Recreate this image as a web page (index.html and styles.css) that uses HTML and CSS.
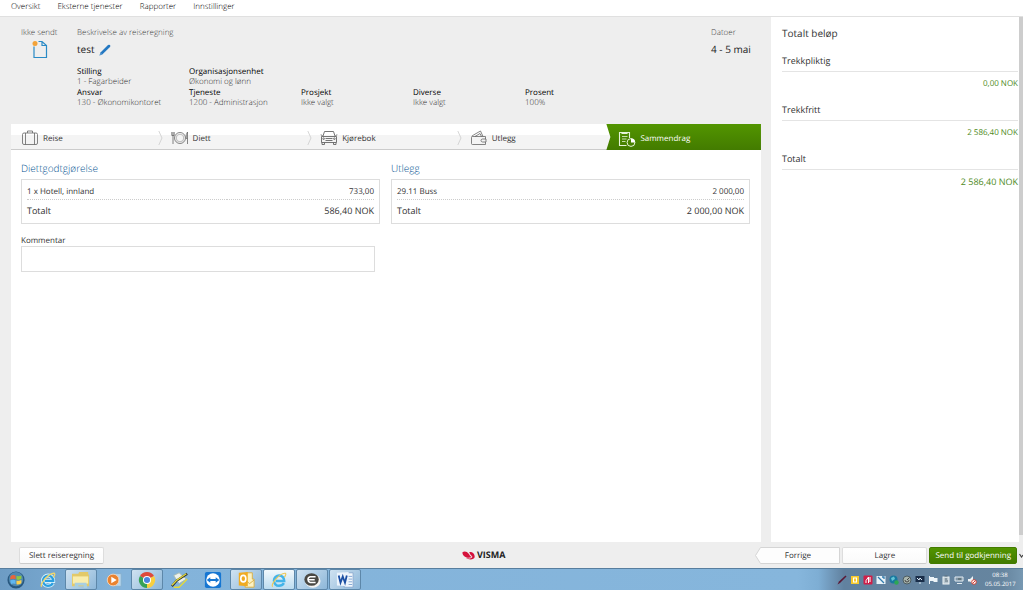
FILE: index.html
```html
<!DOCTYPE html>
<html lang="no">
<head>
<meta charset="utf-8">
<title>Reiseregning</title>
<link rel="stylesheet" href="styles.css">
</head>
<body>
<nav class="topnav">
  <a href="#">Oversikt</a>
  <a href="#">Eksterne tjenester</a>
  <a href="#">Rapporter</a>
  <a href="#">Innstillinger</a>
</nav>

<div class="workspace">
  <main class="claim">
    <header class="claim-head">
      <div class="status">
        <span class="label">Ikke sendt</span>
        <svg class="status-icon" viewBox="0 0 16 19" aria-hidden="true">
          <path d="M2 6.500V17.500H14.500V5.500L10 1.500H6.500M10 1.500V5.500H14.500" fill="none" stroke="#2a8bc6" stroke-width="1.200"/>
          <circle cx="3" cy="3.500" r="2.500" fill="#f2a33a"/>
        </svg>
      </div>
      <div class="about">
        <span class="label">Beskrivelse av reiseregning</span>
        <h1 class="title">test
          <button class="edit" type="button" aria-label="Rediger">
            <svg viewBox="0 0 12 12" aria-hidden="true"><path d="M.5 11.500L1.500 8.500 9 1Q10 .300 11 1 11.700 2 11 3L3.500 10.200Z" fill="#2478c2"/><path d="M.5 11.500L1.500 8.500 3.500 10.200Z" fill="#5d9bd0"/></svg>
          </button>
        </h1>
        <dl class="details">
          <div><dt>Stilling</dt><dd>1 - Fagarbeider</dd></div>
          <div class="wide"><dt>Organisasjonsenhet</dt><dd>Økonomi og lønn</dd></div>
          <div><dt>Ansvar</dt><dd>130 - Økonomikontoret</dd></div>
          <div><dt>Tjeneste</dt><dd>1200 - Administrasjon</dd></div>
          <div><dt>Prosjekt</dt><dd>Ikke valgt</dd></div>
          <div><dt>Diverse</dt><dd>Ikke valgt</dd></div>
          <div><dt>Prosent</dt><dd>100%</dd></div>
        </dl>
      </div>
      <div class="dates">
        <span class="label">Datoer</span>
        <span class="title">4 - 5 mai</span>
      </div>
    </header>

    <div class="steps">
      <a class="step" href="#">
        <svg class="step-icon" viewBox="0 0 18 16" aria-hidden="true"><g fill="none" stroke="#666" stroke-width=".8"><rect x="1.500" y="3" width="15" height="11.500" rx="1.500"/><path d="M4.500 3V14.500M13.500 3V14.500M6.500 3V1H11.500V3"/></g></svg>
        Reise
        <svg class="chevron" viewBox="0 0 5 16" aria-hidden="true"><path d="M.8 1L4 8 .8 15" fill="none" stroke="#ccc" stroke-width=".8"/></svg>
      </a>
      <a class="step" href="#">
        <svg class="step-icon" viewBox="0 0 18 16" aria-hidden="true"><g fill="none" stroke="#666" stroke-width=".8"><circle cx="9" cy="8" r="5.500"/><circle cx="9" cy="8" r="3.800" stroke="#aaa"/><path d="M2 6V14M.8 2V5.500H3.200V2M2 2V6M16.500 14V2Q14.800 4 15.200 8.500H16.500"/></g></svg>
        Diett
        <svg class="chevron" viewBox="0 0 5 16" aria-hidden="true"><path d="M.8 1L4 8 .8 15" fill="none" stroke="#ccc" stroke-width=".8"/></svg>
      </a>
      <a class="step" href="#">
        <svg class="step-icon" viewBox="0 0 18 16" aria-hidden="true"><g fill="none" stroke="#666" stroke-width=".9"><path d="M3 6L4.500 1.500H13.500L15 6M1.500 6.500H16.500V12.500H1.500ZM2 12.500V14.500H4.500V12.500M13.500 12.500V14.500H16V12.500M2.500 5.500L.7 4.800M15.500 5.500L17.300 4.800M5.500 8.500H12.500M5.500 10.500H12.500"/><circle cx="3.600" cy="8.700" r=".8"/><circle cx="14.400" cy="8.700" r=".8"/></g></svg>
        Kjørebok
        <svg class="chevron" viewBox="0 0 5 16" aria-hidden="true"><path d="M.8 1L4 8 .8 15" fill="none" stroke="#ccc" stroke-width=".8"/></svg>
      </a>
      <a class="step" href="#">
        <svg class="step-icon" viewBox="0 0 18 16" aria-hidden="true"><g fill="none" stroke="#666" stroke-width=".8"><path d="M15.500 9V6.500H2.500Q1.500 6.500 1.500 7.500V13.500Q1.500 14.500 2.500 14.500H15.500V12"/><path d="M2 6.500Q2 5.500 3.500 5L10.500 1 13 6.500M5 6.500L10 3.500 11.500 6.500M16 9H12.500Q11 9.200 11 10.500T12.500 12H16Z"/></g></svg>
        Utlegg
      </a>
      <a class="step current" href="#" aria-current="step">
        <svg class="step-icon" viewBox="0 0 18 16" aria-hidden="true"><g fill="none" stroke="#e6f3d8"><path d="M8.500 14.500H1.500V1.500H11.500V7M4 1V2.500H9V1" stroke-width="1.100"/><path d="M4 5.500H9.500M4 8H8.500M4 10.500H7.500" stroke-width=".8"/><circle cx="13" cy="11.500" r="3.900"/></g><path d="M13 11.500V7.500A4 4 0 0 1 17 11.500Z" fill="#fff"/></svg>
        Sammendrag
      </a>
    </div>

    <section class="summary">
      <div class="cards">
        <section class="card">
          <h2>Diettgodtgjørelse</h2>
          <table>
            <tr><td>1 x Hotell, innland</td><td>733,00</td></tr>
            <tr class="sum"><td>Totalt</td><td>586,40 NOK</td></tr>
          </table>
        </section>
        <section class="card">
          <h2>Utlegg</h2>
          <table>
            <tr><td>29.11 Buss</td><td>2 000,00</td></tr>
            <tr class="sum"><td>Totalt</td><td>2 000,00 NOK</td></tr>
          </table>
        </section>
      </div>
      <div class="comment">
        <label for="comment">Kommentar</label>
        <textarea id="comment"></textarea>
      </div>
    </section>
  </main>

  <aside class="totals">
    <h2>Totalt beløp</h2>
    <dl>
      <dt>Trekkpliktig</dt><dd>0,00 NOK</dd>
      <dt>Trekkfritt</dt><dd>2 586,40 NOK</dd>
      <dt>Totalt</dt><dd class="grand">2 586,40 NOK</dd>
    </dl>
  </aside>
  <div class="scrollbar"></div>
</div>

<footer class="actions">
  <div><button class="btn" type="button">Slett reiseregning</button></div>
  <div class="brand">
    <svg viewBox="0 0 13 9" aria-hidden="true"><path d="M.3 1.500C2-.3 5 .2 6.500 2.500 7.500 4 8.500 5.500 9.800 6 7 7.500 1 7 .3 1.500Z" fill="#d5123c"/><path d="M7.200 1.200C10.500.5 12.800 3 12.700 6 12.300 9 6.500 9 4 7 9 8 10.500 7 10.200 5.200 9 4.500 8 3 7.200 1.200Z" fill="#d5123c"/></svg>
    VISMA
  </div>
  <div class="btn-row">
    <button class="btn back" type="button"><svg viewBox="0 0 85 17" preserveAspectRatio="none" aria-hidden="true"><path d="M5.500.5H84.500V16.500H5.500L.5 8.500Z" fill="#fdfdfd" stroke="#d5d5d5"/></svg><span>Forrige</span></button>
    <button class="btn" type="button">Lagre</button>
    <button class="btn primary" type="button">Send til godkjenning</button>
    <svg class="scroll-down" viewBox="0 0 4 6" aria-hidden="true"><path d="M.5 2L2.500 5 4 3" fill="none" stroke="#444" stroke-width="1.200"/></svg>
  </div>
</footer>

<div class="taskbar">
  <button class="task start" type="button" aria-label="Start"><svg viewBox="0 0 20 20"><circle cx="10" cy="10" r="9.500" fill="#28587f"/><circle cx="10" cy="9" r="8" fill="#4f88b0"/><path d="M4 5.500Q7 3.500 9.500 5V9.300Q7 8 3.500 9.500Z" fill="#e9653a"/><path d="M10.500 5.300Q13 6.500 16 5V9Q13 10.500 10.500 9.500Z" fill="#8fc640"/><path d="M3.500 10.500Q7 9 9.500 10.300V14.500Q7 13 4.500 14.500Z" fill="#5fb6ef"/><path d="M10.500 10.500Q13 11.500 16 10V13.500Q13 15.500 10.500 14.700Z" fill="#fbd04c"/></svg></button>
  <button class="task" type="button" aria-label="Internet Explorer"><svg viewBox="0 0 20 20"><path d="M15.500 13.500Q13.500 16.500 10 16.500A5.700 5.700 0 1 1 15.800 11H6.500" fill="none" stroke="#d8f1fb" stroke-width="4.400"/><path d="M15.500 13.500Q13.500 16.500 10 16.500A5.700 5.700 0 1 1 15.800 11H6.500" fill="none" stroke="#2b9fe0" stroke-width="2.600"/><path d="M3 17.500Q1 16 6 9.500 12.500 2 17 2.500 18.500 3.500 16 7" fill="none" stroke="#f3d76a" stroke-width="1.500"/></svg></button>
  <button class="task open" type="button" aria-label="Utforsker"><svg viewBox="0 0 20 20"><path d="M0 3H7L8 1H18V4H19V17H0Z" fill="#e3c968"/><path d="M1 6H18V14H1Z" fill="#f9edad"/><path d="M3 13H16L17 19H13V16H7V19H3Z" fill="#a9cfe0"/></svg></button>
  <button class="task" type="button" aria-label="Media Player"><svg viewBox="0 0 20 20"><path d="M10 3H18V17H10Z" fill="#b8d6ec" stroke="#86afcd"/><circle cx="9" cy="10" r="6.500" fill="#e9822f" stroke="#f5d5b8"/><path d="M7 6.500L13 10 7 13.500Z" fill="#fff"/></svg></button>
  <button class="task open" type="button" aria-label="Chrome"><svg viewBox="0 0 20 20"><path d="M10 10L2.200 5.500A9 9 0 0 1 17.800 5.500Z" fill="#de4a3b"/><path d="M10 10L17.800 5.500A9 9 0 0 1 10 19Z" fill="#f9cf3f"/><path d="M10 10V19A9 9 0 0 1 2.200 5.500Z" fill="#37a257"/><circle cx="10" cy="10" r="4.500" fill="#fff"/><circle cx="10" cy="10" r="3.400" fill="#4a86e0"/></svg></button>
  <button class="task" type="button" aria-label="Notater"><svg viewBox="0 0 20 20"><path d="M3 5L9 2 17 9 9 14Z" fill="#edf2ec" stroke="#a9bab0"/><path d="M1 17L6 11 18 3" fill="none" stroke="#333" stroke-width="2.600"/><path d="M1 16L6 10.500 17 3M3 18H9L18 9" fill="none" stroke="#e5da36" stroke-width="1.500"/></svg></button>
  <button class="task" type="button" aria-label="TeamViewer"><svg viewBox="0 0 20 20"><rect x="1" y="1" width="18" height="18" rx="2" fill="#1676d2"/><circle cx="10" cy="10" r="7.500" fill="#fff"/><path d="M3 10L7 7V9H13V7L17 10 13 13V11H7V13Z" fill="#1676d2"/></svg></button>
  <button class="task open" type="button" aria-label="Outlook"><svg viewBox="0 0 20 20"><path d="M10 2H17V9H19V18H9Z" fill="#fcf2c3" stroke="#d8ad40"/><path d="M9 10L14 14 19 10" fill="none" stroke="#d8ad40"/><path d="M2 2L12 1V17L2 16Z" fill="#f0ab22"/><ellipse cx="7" cy="8.500" rx="2.800" ry="3.600" fill="none" stroke="#fff" stroke-width="1.800"/></svg></button>
  <button class="task open active" type="button" aria-label="Internet Explorer"><svg viewBox="0 0 20 20"><path d="M15.500 13.500Q13.500 16.500 10 16.500A5.700 5.700 0 1 1 15.800 11H6.500" fill="none" stroke="#43b4e9" stroke-width="2.800"/><path d="M3 17.500Q1 16 6 9.500 12.500 2 17 2.500 18.500 3.500 16 7" fill="none" stroke="#edc95a" stroke-width="1.300"/></svg></button>
  <button class="task open" type="button" aria-label="Ephorte"><svg viewBox="0 0 20 20"><ellipse cx="11" cy="11" rx="8.500" ry="7.500" fill="#f3f3f1"/><ellipse cx="9.500" cy="9.500" rx="8" ry="7" fill="#494843"/><path d="M14 6.500H8Q5.500 7 5.500 9.500T8 12.800H14M6 9.600H13" fill="none" stroke="#fff" stroke-width="1.700"/></svg></button>
  <button class="task open" type="button" aria-label="Word"><svg viewBox="0 0 20 20"><path d="M9 2H19V18H9Z" fill="#f3f8fc" stroke="#8aa8cf"/><path d="M13 6H18M13 9H18M13 12H18M13 15H18" stroke="#7da0d0"/><path d="M1 2L14 1V17L1 16Z" fill="#edf4fc"/><path d="M3 5L5 13 7.500 6 10 13 12 5" fill="none" stroke="#1c4fa3" stroke-width="2"/></svg></button>

  <div class="tray">
    <svg viewBox="0 0 10 10"><path d="M.5 9.500L2 6.500 8.500.5 9.500 1.500 3 8Z" fill="#5a1835"/></svg>
    <svg viewBox="0 0 10 10"><rect x="1" y="1" width="8" height="8" fill="#f7c92d"/><rect x="3.500" y="3" width="3" height="4" fill="none" stroke="#fff"/></svg>
    <svg viewBox="0 0 10 10"><rect x=".5" y=".5" width="9" height="9" rx="1" fill="#cf1f48"/><path d="M3 8V5.500L5.500 2V8M7 2V7" stroke="#fff" fill="none"/></svg>
    <svg viewBox="0 0 10 10"><rect x=".5" y="1" width="9" height="8" fill="#e9f2f8"/><path d="M2 2L8 8M6 2H8V4" stroke="#327cae" fill="none" stroke-width="1.300"/></svg>
    <svg viewBox="0 0 10 10"><circle cx="4.500" cy="4.500" r="4" fill="#19789f"/><path d="M2 3L5 1.500 6 4 3 6Z" fill="#63c4d5"/><circle cx="7.500" cy="7.500" r="2.200" fill="#2da654"/></svg>
    <svg viewBox="0 0 10 10"><circle cx="5" cy="5" r="4" fill="#a8b5ad" stroke="#4d5d62"/><path d="M5 5L7.500 2.500M3 5A2 2 0 0 0 7 5" stroke="#444" fill="none"/></svg>
    <svg viewBox="0 0 10 10"><path d="M.5 1H9.500V7H.5Z" fill="#192d48"/><path d="M2 3L4 5 5 3 7 5M5 7V9" stroke="#dceaf6" fill="none"/></svg>
    <svg viewBox="0 0 10 10"><path d="M1.500 1V9" stroke="#eef4f8"/><path d="M2 2H6V3H9.500V7H5.500V6H2Z" fill="#edf4f8"/></svg>
    <svg viewBox="0 0 10 10"><rect x="2" y="2" width="6" height="7" fill="#b7c6cf" stroke="#eef3f5"/><path d="M3.500 1H6.500M4 4H6M4 6H7" stroke="#5b6c79"/></svg>
    <svg viewBox="0 0 10 10"><path d="M1 2H9V6H1ZM3 8.500H8" fill="#8298a8" stroke="#e1eaf0"/><path d="M4 4H7" stroke="#455"/></svg>
    <svg viewBox="0 0 10 10"><path d="M1 4H3L6 1V9L3 6.500H1Z" fill="#eff3f5"/><circle cx="7" cy="7" r="2.300" fill="#fff" stroke="#d44338"/><path d="M5.500 8.500L8.500 5.500" stroke="#d44338"/></svg>
  </div>
  <div class="clock"><span>08:38</span><span>05.05.2017</span></div>
</div>
</body>
</html>
```
FILE: styles.css
```css
* { box-sizing: border-box; }

body {
  margin: 0;
  height: 100vh;
  display: flex;
  flex-direction: column;
  background: #eee;
  color: #333;
  font: 400 8px/11px "Open Sans", "Noto Sans", sans-serif;
  text-rendering: geometricPrecision;
}

a { color: inherit; text-decoration: none; }
h1, h2, dl, dd { margin: 0; font-weight: inherit; }
button { font: inherit; color: inherit; cursor: pointer; text-rendering: inherit; }
svg { display: block; }

.topnav {
  flex: none;
  display: flex;
  gap: 17px;
  height: 17px;
  padding: 0 11px;
  background: #fff;
  border-bottom: 1px solid #e0e0e0;
  color: #000;
  font-weight: 300;
  line-height: 14px;
}

.workspace { flex: 1; display: flex; min-height: 0; }

.claim {
  flex: 1;
  display: flex;
  flex-direction: column;
  min-width: 0;
  padding: 10px 10px 0 11px;
}

.claim-head { display: flex; padding-bottom: 16px; }
.label { display: block; color: #444; font-weight: 300; }
.status { flex: none; width: 66px; padding-left: 10px; }
.status-icon { width: 16px; height: 19px; margin: 2px 0 0 11px; }
.about { flex: 1; min-width: 0; }
.title { display: flex; align-items: center; gap: 4px; height: 23px; font-size: 10px; color: #222; }
.edit { padding: 0; border: 0; background: none; }
.edit svg { width: 12px; height: 12px; }
.dates { width: 50px; white-space: nowrap; }

.details {
  display: grid;
  grid-template-columns: repeat(5, 112px);
  padding-top: 5px;
}
.details .wide { grid-column: span 4; }
.details dt { color: #000; line-height: 11px; }
.details dd { color: #333; font-weight: 300; line-height: 10px; white-space: nowrap; }

.steps {
  flex: none;
  display: flex;
  height: 26px;
  background: linear-gradient(#fff 45%, #f4f4f4 45%);
  border-bottom: 1px solid #ccc;
}
.step {
  flex: 1;
  display: flex;
  align-items: center;
  gap: 4px;
  padding-left: 10px;
  padding-top: 3px;
}
.step + .step { padding-left: 7px; }
.step-icon { width: 18px; height: 16px; }
.chevron { width: 5px; height: 16px; margin-left: auto; margin-right: 1px; }
.step.current {
  height: 26px;
  margin-left: -6px;
  flex: 1 0 6px;
  padding-left: 12px;
  color: #fff;
  background: linear-gradient(#529500, #437b00);
  clip-path: polygon(0 0, 100% 0, 100% 100%, 0 100%, 4px 50%);
}

.summary { flex: 1; padding: 11px 11px 0 10px; background: #fff; }
.cards { display: grid; grid-template-columns: 1fr 1fr; gap: 11px; }
.card h2 { font-size: 10px; line-height: 14px; font-weight: 300; color: #00508f; }
.card table {
  width: 100%;
  margin-top: 4px;
  padding: 3px 5px 4px;
  border: 1px solid #ddd;
  border-spacing: 0;
}
.card td { padding: 0; height: 16px; }
.card td:last-child { text-align: right; }
.card .sum td { height: 20px; padding-top: 2px; border-top: 1px dotted #ccc; font-size: 9px; }

.comment { width: 354px; max-width: 100%; margin-top: 11px; }
.comment label { display: block; line-height: 11px; }
.comment textarea { display: block; width: 100%; height: 26px; border: 1px solid #ddd; resize: none; font: inherit; outline: none; }

.totals { width: 248px; flex: none; padding: 9px 1px 0 11px; background: #fff; }
.totals h2 { font-size: 10px; line-height: 14px; }
.totals dl { padding-top: 15px; }
.totals dt { height: 17px; border-bottom: 1px solid #e4e4e4; font-size: 9px; line-height: 12px; }
.totals dd { height: 32px; padding-top: 6px; text-align: right; color: #4e8a1c; }
.totals .grand { font-size: 9px; line-height: 12px; }
.scrollbar { flex: none; width: 4px; margin-bottom: 7px; background: #cdcdcd; }

.actions {
  flex: none;
  display: grid;
  grid-template-columns: 440fr auto 514fr;
  align-items: center;
  height: 26px;
  padding-left: 19px;
}
.btn {
  min-width: 85px;
  height: 17px;
  padding: 0 5px;
  border: 1px solid #ddd;
  border-bottom-color: #ccc;
  border-radius: 2px;
  background: linear-gradient(#fff, #fafafa);
  line-height: 15px;
  white-space: nowrap;
}
.btn-row { display: flex; justify-content: flex-end; align-items: center; gap: 2px; }
.btn.back { position: relative; padding: 0; border: 0; background: none; }
.back svg { position: absolute; inset: 0; width: 100%; height: 100%; }
.back span { position: relative; }
.btn.primary { border-color: #437b00; background: linear-gradient(#529500, #437b00); color: #fff; }
.scroll-down { width: 4px; height: 6px; }
.brand { display: flex; align-items: center; gap: 2px; font: 700 9px/12px "Open Sans", sans-serif; color: #222; }
.brand svg { width: 13px; height: 9px; }

.taskbar {
  flex: none;
  display: flex;
  align-items: stretch;
  height: 22px;
  padding-right: 8px;
  background: linear-gradient(90deg, #6d9cc4, #83b3da 12%, #86b6dc 78%, #7eaed4 80%, #61819f 82.500%, #66859f 98%, #7798b2);
  border-top: 1px solid #587e9e;
}
.task {
  flex: none;
  width: 32px;
  margin-right: 1px;
  padding: 0;
  border: 1px solid transparent;
  background: none;
}
.task.start { width: 31px; }
.task svg { width: 18px; height: 18px; margin: auto; }
.task.open { border-color: #5d87a9; border-radius: 2px; background: linear-gradient(135deg, #cfe2f1, #8db7d9); }
.task.active { background: linear-gradient(#f2f8fc, #bcdcf0); }
.tray { display: flex; align-items: center; gap: 3px; margin-left: auto; }
.tray svg { width: 10px; height: 10px; }
.clock { width: 30px; margin-left: 8px; padding-top: 2px; color: #fff; font-size: 6px; line-height: 9px; text-align: center; }
.clock span { display: block; }
```
